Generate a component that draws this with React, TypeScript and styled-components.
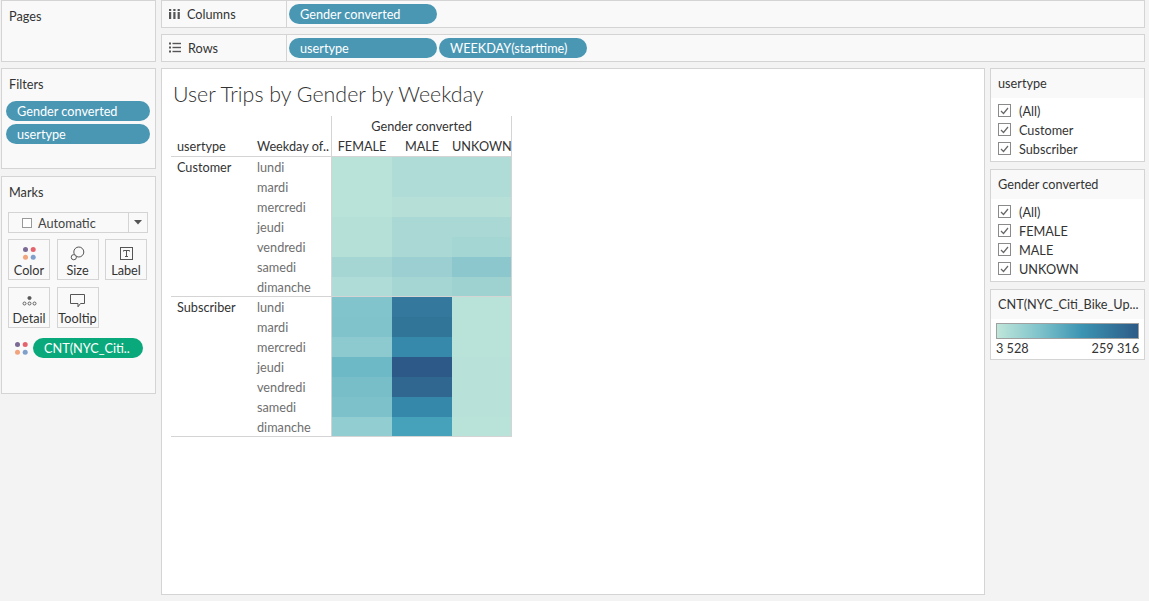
import React from "react";
import styled, { createGlobalStyle } from "styled-components";

const GlobalStyle = createGlobalStyle`
  * { box-sizing: border-box; }
  html, body { margin: 0; padding: 0; background: #f3f3f3; }
  body {
    font-family: Lato, "Open Sans", "Liberation Sans", sans-serif;
    font-size: 12.7px;
    color: #333;
  }
`;

const Page = styled.div`
  width: 1149px;
  height: 601px;
  padding-left: 1px;
  display: flex;
  flex-direction: column;
  gap: 6px;
  overflow: hidden;
`;

const TopRow = styled.div`
  display: flex;
  gap: 5px;
  height: 62px;
`;

const SidePanel = styled.div<{ $h: number }>`
  width: 155px;
  height: ${(p) => p.$h}px;
  background: #f9f9f9;
  border: 1px solid #d4d4d4;
  padding: 7px 6px 0 6px;
  display: flex;
  flex-direction: column;
`;

const PanelTitle = styled.div`
  line-height: 16px;
  color: #333;
  padding-left: 1px;
`;

const Shelves = styled.div`
  width: 984px;
  display: flex;
  flex-direction: column;
  gap: 6px;
`;

const Shelf = styled.div`
  height: 28px;
  display: flex;
  align-items: center;
  background: #f9f9f9;
  border: 1px solid #d4d4d4;
`;

const ShelfLabel = styled.div`
  width: 125px;
  height: 100%;
  border-right: 1px solid #d4d4d4;
  display: flex;
  align-items: center;
  gap: 7px;
  padding-left: 7px;
  padding-bottom: 1px;
  color: #333;
`;

const PillRow = styled.div`
  display: flex;
  gap: 2px;
  padding-left: 2px;
`;

const Pill = styled.div<{ $w: number; $green?: boolean }>`
  width: ${(p) => p.$w}px;
  height: 20px;
  border-radius: 10px;
  background: ${(p) => (p.$green ? "#0aa97b" : "#4a97b4")};
  color: #fff;
  padding-left: 11px;
  padding-bottom: 1px;
  display: flex;
  align-items: center;
  white-space: nowrap;
  overflow: hidden;
`;

const FilterPills = styled.div`
  display: flex;
  flex-direction: column;
  gap: 3px;
  margin-top: 9px;
  margin-left: -2px;
`;

const MainRow = styled.div`
  display: flex;
  height: 527px;
`;

const LeftCol = styled.div`
  display: flex;
  flex-direction: column;
  gap: 7px;
  margin-right: 5px;
`;

const Dropdown = styled.div`
  margin-top: 12px;
  width: 140px;
  height: 21px;
  border: 1px solid #d4d4d4;
  background: #f9f9f9;
  display: flex;
  align-items: center;
`;

const DropMain = styled.div`
  flex: 1;
  display: flex;
  align-items: center;
  gap: 6px;
  padding-left: 13px;
  height: 100%;
  color: #444;
`;

const SmallBox = styled.span`
  width: 10px;
  height: 10px;
  border: 1px solid #999;
  background: #fff;
  display: inline-block;
`;

const DropCaret = styled.div`
  width: 19px;
  height: 100%;
  border-left: 1px solid #d4d4d4;
  display: flex;
  align-items: center;
  justify-content: center;
`;

const MarkGrid = styled.div`
  display: grid;
  grid-template-columns: repeat(3, 42px);
  grid-auto-rows: 41px;
  column-gap: 6.5px;
  row-gap: 7px;
  margin-top: 6px;
`;

const MarkButton = styled.div`
  border: 1px solid #d4d4d4;
  background: #f9f9f9;
  display: flex;
  flex-direction: column;
  align-items: center;
  justify-content: space-between;
  padding: 5px 0 1px;
  color: #333;
  line-height: 15px;
`;

const IconSlot = styled.div`
  height: 16px;
  display: flex;
  align-items: center;
  justify-content: center;
`;

const CntRow = styled.div`
  display: flex;
  align-items: center;
  gap: 5px;
  margin-top: 10px;
  padding-left: 7px;
`;

const MainView = styled.div`
  width: 824px;
  height: 527px;
  background: #fff;
  border: 1px solid #d4d4d4;
  margin-right: 5px;
  padding: 12px 0 0 9px;
`;

const Title = styled.div`
  font-size: 21.4px;
  font-weight: 300;
  color: #333;
  line-height: 26px;
  padding-left: 2px;
`;

const Table = styled.div`
  margin-top: 9px;
  display: grid;
  grid-template-columns: 80px 80px 181px;
  line-height: 16px;
`;

const HeadCell = styled.div<{ $bottom?: boolean }>`
  height: ${(p) => (p.$bottom ? 21 : 20)}px;
  display: flex;
  align-items: center;
  padding-left: 6px;
  color: #333;
  white-space: nowrap;
  ${(p) => (p.$bottom ? "border-bottom: 1px solid #d4d4d4;" : "")}
`;

const GroupHead = styled.div<{ $bottom?: boolean }>`
  border-left: 1px solid #d4d4d4;
  border-right: 1px solid #d4d4d4;
  display: grid;
  grid-template-columns: 60px 60px 59px;
  align-items: center;
  height: ${(p) => (p.$bottom ? 21 : 20)}px;
  ${(p) => (p.$bottom ? "border-bottom: 1px solid #d4d4d4;" : "")}
  color: #333;
  white-space: nowrap;
`;

const GroupTitle = styled.div`
  grid-column: 1 / span 3;
  text-align: center;
`;

const ColLabel = styled.div`
  text-align: center;
`;

const RowHeader = styled.div`
  height: 140px;
  border-bottom: 1px solid #d4d4d4;
  padding: 2px 0 0 6px;
  color: #333;
`;

const DayList = styled.div`
  height: 140px;
  overflow: hidden;
  border-bottom: 1px solid #d4d4d4;
  display: grid;
  grid-auto-rows: 20px;
`;

const Day = styled.div`
  padding-left: 6px;
  display: flex;
  align-items: center;
  color: #6f6f6f;
`;

const Cells = styled.div`
  height: 140px;
  overflow: hidden;
  border-left: 1px solid #d4d4d4;
  border-right: 1px solid #d4d4d4;
  border-bottom: 1px solid #d4d4d4;
  display: grid;
  grid-template-columns: 60px 60px 59px;
  grid-auto-rows: 20px;
`;

const Cell = styled.div<{ $bg: string }>`
  background: ${(p) => p.$bg};
`;

const RightCol = styled.div`
  width: 155px;
  display: flex;
  flex-direction: column;
  gap: 7px;
`;

const Card = styled.div<{ $h: number }>`
  height: ${(p) => p.$h}px;
  border: 1px solid #d4d4d4;
  background: #fff;
  display: flex;
  flex-direction: column;
`;

const CardHeader = styled.div`
  height: 29px;
  background: #f9f9f9;
  display: flex;
  align-items: center;
  padding-left: 7px;
  padding-bottom: 2px;
  color: #333;
  white-space: nowrap;
  overflow: hidden;
`;

const CheckList = styled.div`
  padding: 3px 0 0 7px;
  display: grid;
  grid-auto-rows: 19px;
`;

const CheckItem = styled.div`
  display: flex;
  align-items: center;
  gap: 8px;
  color: #333;
`;

const CheckBox = styled.span`
  width: 13px;
  height: 13px;
  border: 1px solid #8a8a8a;
  background: #fff;
  display: flex;
  align-items: center;
  justify-content: center;
`;

const LegendBody = styled.div`
  padding: 4px 5px 0 5px;
`;

const LegendBar = styled.div`
  height: 16px;
  border: 1px solid #a0a0a0;
  background: linear-gradient(to right, #bfe6da 0%, #7fc3cb 30%, #3c94b3 60%, #2d5b87 100%);
`;

const LegendLabels = styled.div`
  display: flex;
  justify-content: space-between;
  line-height: 18px;
  color: #333;
`;

const days = ["lundi", "mardi", "mercredi", "jeudi", "vendredi", "samedi", "dimanche"];

const customer = [
  ["#b9e2d9", "#b0dcd7", "#b0dcd7"],
  ["#b9e2d9", "#b0dcd7", "#b0dcd7"],
  ["#b9e2d9", "#b6dfd8", "#b6dfd8"],
  ["#b5e0d8", "#aad9d5", "#aad9d5"],
  ["#b5e0d8", "#aad9d5", "#a4d6d3"],
  ["#a5d6d3", "#9ccfd1", "#8bc7cc"],
  ["#b0dcd7", "#a5d6d3", "#9dd2d1"],
];

const subscriber = [
  ["#82c4cc", "#34799d", "#b9e2d9"],
  ["#80c3cb", "#317698", "#b9e2d9"],
  ["#8dcad0", "#3689aa", "#b9e2d9"],
  ["#6eb9c6", "#2c5987", "#b8e1d9"],
  ["#78bec8", "#2f6790", "#b8e1d9"],
  ["#7dc2ca", "#3688aa", "#b8e1d9"],
  ["#92cdd1", "#46a2bb", "#b9e2d9"],
];

const ColumnsIcon = () => (
  <svg width="11" height="10" viewBox="0 0 11 10">
    <g fill="#555">
      <rect x="0" y="0" width="2.2" height="2" />
      <rect x="0" y="3" width="2.2" height="7" />
      <rect x="4.3" y="0" width="2.2" height="2" />
      <rect x="4.3" y="3" width="2.2" height="7" />
      <rect x="8.6" y="0" width="2.2" height="2" />
      <rect x="8.6" y="3" width="2.2" height="7" />
    </g>
  </svg>
);

const RowsIcon = () => (
  <svg width="12" height="11" viewBox="0 0 12 11">
    <g fill="#555">
      <rect x="0" y="0.5" width="2" height="2" />
      <rect x="3.5" y="0.8" width="8.5" height="1.4" />
      <rect x="0" y="4.5" width="2" height="2" />
      <rect x="3.5" y="4.8" width="8.5" height="1.4" />
      <rect x="0" y="8.5" width="2" height="2" />
      <rect x="3.5" y="8.8" width="8.5" height="1.4" />
    </g>
  </svg>
);

const ColorDots = () => (
  <svg width="13" height="13" viewBox="0 0 13 13">
    <circle cx="2.5" cy="2.5" r="2.5" fill="#7b6a94" />
    <circle cx="10.2" cy="2.5" r="2.5" fill="#e5636d" />
    <circle cx="2.5" cy="10.3" r="2.5" fill="#f2a47d" />
    <circle cx="10.2" cy="10.3" r="2.5" fill="#7fa0cb" />
  </svg>
);

const SizeIcon = () => (
  <svg width="15" height="15" viewBox="0 0 15 15" fill="none" stroke="#555" strokeWidth="1">
    <circle cx="8.8" cy="6" r="5" />
    <circle cx="3.8" cy="11.2" r="2.6" fill="#f9f9f9" />
  </svg>
);

const LabelIcon = () => (
  <svg width="13" height="13" viewBox="0 0 13 13" fill="none" stroke="#555" strokeWidth="1">
    <rect x="0.5" y="0.5" width="12" height="12" />
    <path d="M3.5 4.5 V3.5 H9.5 V4.5 M6.5 3.5 V9.5 M5 9.5 H8" />
  </svg>
);

const DetailIcon = () => (
  <svg width="15" height="10" viewBox="0 0 15 10" fill="none" stroke="#555" strokeWidth="0.9">
    <circle cx="7.5" cy="2" r="1.6" fill="#555" />
    <circle cx="2.5" cy="7.5" r="1.5" />
    <circle cx="7.5" cy="7.5" r="1.5" />
    <circle cx="12.5" cy="7.5" r="1.5" />
  </svg>
);

const TooltipIcon = () => (
  <svg width="15" height="14" viewBox="0 0 15 14" fill="none" stroke="#555" strokeWidth="1">
    <path d="M0.5 0.5 H14.5 V9.5 H10.5 L8 12.8 V9.5 H0.5 Z" />
  </svg>
);

const Caret = () => (
  <svg width="8" height="5" viewBox="0 0 8 5">
    <path d="M0 0 H8 L4 4.5 Z" fill="#555" />
  </svg>
);

const Check = () => (
  <svg width="9" height="8" viewBox="0 0 9 8" fill="none" stroke="#666" strokeWidth="1.2">
    <path d="M1 4 L3.5 6.5 L8 1" />
  </svg>
);

const Filter = ({ title, items, h }: { title: string; items: string[]; h: number }) => (
  <Card $h={h}>
    <CardHeader>{title}</CardHeader>
    <CheckList>
      {items.map((it) => (
        <CheckItem key={it}>
          <CheckBox>
            <Check />
          </CheckBox>
          {it}
        </CheckItem>
      ))}
    </CheckList>
  </Card>
);

const Group = ({ name, data }: { name: string; data: string[][] }) => (
  <>
    <RowHeader>{name}</RowHeader>
    <DayList>
      {days.map((d) => (
        <Day key={d}>{d}</Day>
      ))}
    </DayList>
    <Cells>
      {data.flatMap((row, i) => row.map((c, j) => <Cell key={`${i}-${j}`} $bg={c} />))}
    </Cells>
  </>
);

export default function App() {
  return (
    <>
      <GlobalStyle />
      <Page>
        <TopRow>
          <SidePanel $h={62}>
            <PanelTitle>Pages</PanelTitle>
          </SidePanel>
          <Shelves>
            <Shelf>
              <ShelfLabel>
                <ColumnsIcon />
                Columns
              </ShelfLabel>
              <PillRow>
                <Pill $w={148}>Gender converted</Pill>
              </PillRow>
            </Shelf>
            <Shelf>
              <ShelfLabel>
                <RowsIcon />
                Rows
              </ShelfLabel>
              <PillRow>
                <Pill $w={148}>usertype</Pill>
                <Pill $w={148}>WEEKDAY(starttime)</Pill>
              </PillRow>
            </Shelf>
          </Shelves>
        </TopRow>

        <MainRow>
          <LeftCol>
            <SidePanel $h={101}>
              <PanelTitle>Filters</PanelTitle>
              <FilterPills>
                <Pill $w={144}>Gender converted</Pill>
                <Pill $w={144}>usertype</Pill>
              </FilterPills>
            </SidePanel>
            <SidePanel $h={218}>
              <PanelTitle>Marks</PanelTitle>
              <Dropdown>
                <DropMain>
                  <SmallBox />
                  Automatic
                </DropMain>
                <DropCaret>
                  <Caret />
                </DropCaret>
              </Dropdown>
              <MarkGrid>
                <MarkButton>
                  <IconSlot>
                    <ColorDots />
                  </IconSlot>
                  Color
                </MarkButton>
                <MarkButton>
                  <IconSlot>
                    <SizeIcon />
                  </IconSlot>
                  Size
                </MarkButton>
                <MarkButton>
                  <IconSlot>
                    <LabelIcon />
                  </IconSlot>
                  Label
                </MarkButton>
                <MarkButton>
                  <IconSlot>
                    <DetailIcon />
                  </IconSlot>
                  Detail
                </MarkButton>
                <MarkButton>
                  <IconSlot>
                    <TooltipIcon />
                  </IconSlot>
                  Tooltip
                </MarkButton>
              </MarkGrid>
              <CntRow>
                <ColorDots />
                <Pill $w={110} $green>
                  CNT(NYC_Citi..
                </Pill>
              </CntRow>
            </SidePanel>
          </LeftCol>

          <MainView>
            <Title>User Trips by Gender by Weekday</Title>
            <Table>
              <HeadCell />
              <HeadCell />
              <GroupHead>
                <GroupTitle>Gender converted</GroupTitle>
              </GroupHead>
              <HeadCell $bottom>usertype</HeadCell>
              <HeadCell $bottom>Weekday of..</HeadCell>
              <GroupHead $bottom>
                <ColLabel>FEMALE</ColLabel>
                <ColLabel>MALE</ColLabel>
                <ColLabel>UNKOWN</ColLabel>
              </GroupHead>
              <Group name="Customer" data={customer} />
              <Group name="Subscriber" data={subscriber} />
            </Table>
          </MainView>

          <RightCol>
            <Filter title="usertype" items={["(All)", "Customer", "Subscriber"]} h={94} />
            <Filter title="Gender converted" items={["(All)", "FEMALE", "MALE", "UNKOWN"]} h={113} />
            <Card $h={71}>
              <CardHeader>CNT(NYC_Citi_Bike_Up...</CardHeader>
              <LegendBody>
                <LegendBar />
                <LegendLabels>
                  <span>3 528</span>
                  <span>259 316</span>
                </LegendLabels>
              </LegendBody>
            </Card>
          </RightCol>
        </MainRow>
      </Page>
    </>
  );
}
